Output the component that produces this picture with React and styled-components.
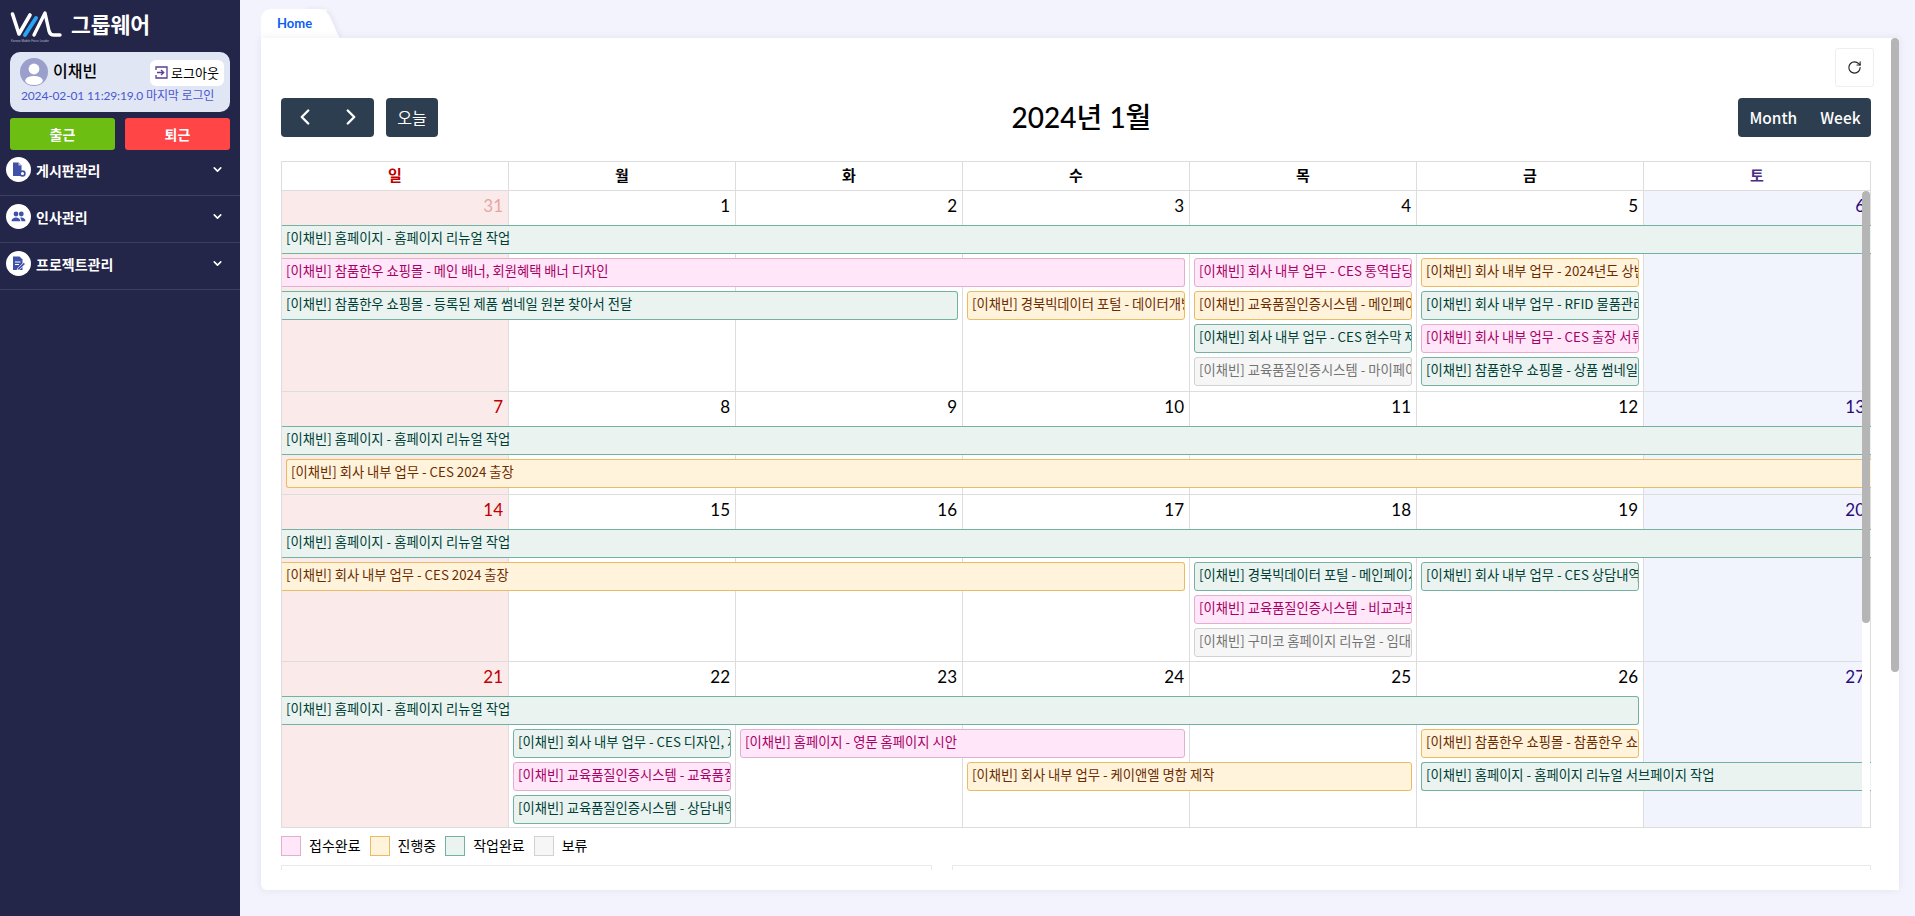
import React from "react";
import styled, { createGlobalStyle } from "styled-components";
import { ChevronDown, ChevronLeft, ChevronRight, RotateCw } from "lucide-react";

const KR = `"Noto Sans CJK KR", sans-serif`;
const LATO = `Lato, "Noto Sans CJK KR", sans-serif`;

const GlobalStyle = createGlobalStyle`
  html, body { margin: 0; padding: 0; height: 100%; overflow: hidden; }
  body { font-family: ${KR}; background: #f3f3fd; color: #000; }
  * { box-sizing: border-box; }
`;

const TONES = {
  pink: { bg: "#ffe6f9", line: "#e2aed2", text: "#a80066" },
  orange: { bg: "#fff3dc", line: "#ebbb62", text: "#6b2c00" },
  green: { bg: "#eaf3f0", line: "#75b1a3", text: "#003f36" },
  gray: { bg: "#f6f6f6", line: "#d2d2d2", text: "#747474" },
};

const Shell = styled.div`
  display: flex;
  width: 1915px;
  height: 916px;
`;

/* sidebar */
const Sidebar = styled.aside`
  width: 240px;
  flex: none;
  background: #232549;
`;

const Brand = styled.div`
  height: 52px;
  padding: 8px 0 0 10px;
  display: flex;
  align-items: flex-start;
  gap: 9px;
`;

const BrandName = styled.span`
  font-size: 21.5px;
  font-weight: 700;
  line-height: 31px;
  color: #fff;
`;

const Profile = styled.div`
  margin: 0 10px;
  height: 60px;
  padding: 6px 6px 0 10px;
  background: #e1e6f5;
  border-radius: 10px;
`;

const ProfileRow = styled.div`
  display: flex;
  align-items: center;
  gap: 5px;
`;

const Avatar = styled.div`
  width: 28px;
  height: 28px;
  border-radius: 50%;
  background: #9a9fcb;
  overflow: hidden;
  flex: none;
`;

const UserName = styled.span`
  font-size: 16px;
  font-weight: 500;
  margin-top: -4px;
`;

const Logout = styled.div`
  margin-left: auto;
  margin-top: 1px;
  width: 74px;
  height: 26px;
  background: #fff;
  border-radius: 6px;
  display: flex;
  align-items: center;
  justify-content: center;
  gap: 3px;
  font-size: 13px;
`;

const LastLogin = styled.div`
  margin: 1px 0 0 1px;
  font-family: ${LATO};
  font-size: 12px;
  line-height: 18px;
  color: #4a58d0;
  white-space: nowrap;
  letter-spacing: -0.15px;
`;

const Attendance = styled.div`
  display: grid;
  grid-template-columns: 105px 105px;
  gap: 10px;
  margin: 6px 10px 0;
`;

const AttendanceButton = styled.div`
  height: 32px;
  border-radius: 3px;
  background: ${(p) => p.$bg};
  color: #fff;
  font-size: 14px;
  font-weight: 700;
  display: flex;
  align-items: center;
  justify-content: center;
`;

const MenuItem = styled.div`
  height: 47px;
  padding: 0 16px 5px 6px;
  border-bottom: 1px solid #3b3d63;
  display: flex;
  align-items: center;
  color: #fff;
  &:first-of-type { height: 46px; padding-bottom: 6px; }
`;

const MenuBadge = styled.span`
  width: 25px;
  height: 25px;
  border-radius: 50%;
  background: #fff;
  flex: none;
  display: flex;
  align-items: center;
  justify-content: center;
`;

const MenuLabel = styled.span`
  margin-left: 5px;
  font-size: 14px;
  font-weight: 700;
  flex: 1;
`;

/* main */
const Main = styled.main`
  flex: 1;
  min-width: 0;
  padding: 9px 16px 26px 21px;
  display: flex;
  flex-direction: column;
`;

const Tab = styled.div`
  position: relative;
  z-index: 0;
  width: 66px;
  height: 29px;
  padding-left: 16px;
  background: #fff;
  border-radius: 10px 0 0 0;
  font-family: ${LATO};
  font-size: 13px;
  font-weight: 700;
  line-height: 29px;
  color: #0d5cf5;
  &::after {
    content: "";
    position: absolute;
    z-index: -1;
    top: 0;
    right: -6px;
    width: 24px;
    height: 29px;
    background: #fff;
    border-radius: 0 8px 0 0;
    transform: skewX(24deg);
    box-shadow: 3px -1px 4px rgba(40, 40, 90, 0.05);
  }
`;

const Card = styled.section`
  position: relative;
  flex: 1;
  min-height: 0;
  padding-bottom: 20px;
  background: #fff;
  border-radius: 0 0 6px 6px;
  box-shadow: 0 0 8px rgba(40, 40, 90, 0.08);
  display: flex;
`;

const CardScroll = styled.div`
  flex: 1;
  min-width: 0;
  overflow: hidden;
  padding: 10px 28px 0 20px;
`;

/* the page's scrollbars, drawn over the content */
const ScrollTrack = styled.div`
  position: absolute;
  z-index: 2;
  top: 0;
  bottom: 0;
  right: ${(p) => p.$right}px;
  width: 8px;
  background: #fff;
`;

const ScrollThumb = styled.div`
  height: ${(p) => p.$height}px;
  background: #b5b5b5;
  border-radius: 4px;
`;

const TopActions = styled.div`
  display: flex;
  justify-content: flex-end;
  margin-right: -3px;
`;

const RefreshButton = styled.div`
  width: 39px;
  height: 39px;
  border: 1px solid #eeeeee;
  border-radius: 3px;
  display: flex;
  align-items: center;
  justify-content: center;
`;

const Toolbar = styled.div`
  margin-top: 11px;
  height: 39px;
  display: flex;
  align-items: center;
  justify-content: space-between;
`;

const ToolGroup = styled.div`
  display: flex;
  gap: 12px;
  width: ${(p) => p.$width}px;
  justify-content: ${(p) => p.$justify || "flex-start"};
`;

const DarkButton = styled.div`
  height: 39px;
  padding-bottom: 2px;
  background: #2c3e50;
  border-radius: 4px;
  color: #fff;
  display: flex;
  align-items: center;
  justify-content: center;
  font-size: ${(p) => p.$size || 14}px;
  font-weight: ${(p) => p.$weight || 400};
  width: ${(p) => p.$width}px;
`;

const ArrowCell = styled.span`
  display: flex;
  justify-content: center;
  width: 46px;
`;

const ViewLabel = styled.span`
  display: block;
  padding: 0 11px 0 12px;
`;

const Title = styled.h2`
  margin: 0;
  font-family: ${LATO};
  font-size: 28px;
  font-weight: 500;
  line-height: 39px;
`;

const Calendar = styled.div`
  margin-top: 24px;
  width: 1590px;
  border-left: 1px solid #dddddd;
  border-top: 1px solid #dddddd;
  border-bottom: 1px solid #dddddd;
`;

const HeadRow = styled.div`
  display: grid;
  grid-template-columns: repeat(7, 227px);
  height: 29px;
  border-bottom: 1px solid #dddddd;
`;

const HeadCell = styled.div`
  border-right: 1px solid #dddddd;
  text-align: center;
  font-size: 15px;
  font-weight: 700;
  line-height: 25px;
  color: ${(p) => p.$color};
`;

const WeekScroll = styled.div`
  position: relative;
  width: 1589px;
  height: 636px;
  overflow: hidden;
`;

const Week = styled.div`
  display: grid;
  height: ${(p) => p.$height}px;
  grid-template-columns: repeat(7, 227px);
  grid-template-rows: 30px repeat(${(p) => p.$rows}, 29px) minmax(0, 1fr);
  row-gap: 4px;
  border-bottom: 1px solid #dddddd;
  overflow: hidden;
`;

const DayCell = styled.div`
  grid-row: 1 / -1;
  grid-column: ${(p) => p.$col};
  border-right: 1px solid #dddddd;
  background: ${(p) => (p.$col === 1 ? "#fbeaea" : p.$col === 7 ? "#f1f4fd" : "#fff")};
  padding: 3px 5px 0 0;
  text-align: right;
  font-family: ${LATO};
  font-size: 17px;
  line-height: 24px;
  color: ${(p) => (p.$col === 1 ? "#c00000" : p.$col === 7 ? "#2a0a7a" : "#000")};
`;

const DayNumber = styled.span`
  opacity: ${(p) => (p.$faded ? 0.3 : 1)};
`;

const Event = styled.div`
  grid-column: ${(p) => p.$from} / ${(p) => p.$to};
  grid-row: ${(p) => p.$row + 1};
  z-index: 1;
  min-width: 0;
  margin-left: ${(p) => (p.$openLeft ? 0 : 4)}px;
  margin-right: ${(p) => (p.$openRight ? 0 : 5)}px;
  padding-left: 4px;
  background: ${(p) => TONES[p.$tone].bg};
  color: ${(p) => TONES[p.$tone].text};
  border: 1px solid ${(p) => TONES[p.$tone].line};
  border-left-width: ${(p) => (p.$openLeft ? 0 : 1)}px;
  border-right-width: ${(p) => (p.$openRight ? 0 : 1)}px;
  border-radius: ${(p) => (p.$openLeft ? 0 : 3)}px ${(p) => (p.$openRight ? 0 : 3)}px
    ${(p) => (p.$openRight ? 0 : 3)}px ${(p) => (p.$openLeft ? 0 : 3)}px;
  font-size: 13.3px;
  font-weight: 400;
  line-height: 24px;
  white-space: nowrap;
  overflow: hidden;
`;

const Legend = styled.div`
  margin-top: 8px;
  height: 20px;
  display: flex;
  align-items: center;
`;

const Swatch = styled.span`
  width: 20px;
  height: 20px;
  flex: none;
  background: ${(p) => TONES[p.$tone].bg};
  border: 1px solid ${(p) => TONES[p.$tone].line};
`;

const LegendLabel = styled.span`
  margin: 0 9px 3px 8px;
  font-size: 14px;
  line-height: 18px;
`;

const Panels = styled.div`
  margin-top: 9px;
  display: grid;
  grid-template-columns: 651px 919px;
  gap: 20px;
`;

const Panel = styled.div`
  height: 227px;
  border: 1px solid #eaeaea;
`;

const LogoMark = () => (
  <svg width="52" height="34" viewBox="0 0 52 34" fill="none">
    <path d="M2.5 6 L9 26 L20 7" stroke="#fff" strokeWidth="3.6" strokeLinejoin="round" strokeLinecap="round" />
    <path d="M15 27 L26 10" stroke="#2aa4f4" strokeWidth="4" strokeLinecap="round" />
    <path d="M24 27 L35 5 L39 23 Q40 27 44 27 L50 27" stroke="#fff" strokeWidth="3.4" strokeLinejoin="round" strokeLinecap="round" />
    <text x="1" y="33.5" fontSize="3" fill="#b9bccf" fontFamily="Liberation Sans, sans-serif">Korean Mobile Force Leader</text>
  </svg>
);

const AvatarFigure = () => (
  <svg width="28" height="28" viewBox="0 0 28 28">
    <circle cx="14" cy="11" r="5.4" fill="#fff" />
    <ellipse cx="14" cy="22.5" rx="8.8" ry="4.6" fill="#fff" />
  </svg>
);

const LogoutIcon = () => (
  <svg width="13" height="13" viewBox="0 0 13 13" fill="none">
    <path d="M1 4 V1 H12 V12 H1 V9" stroke="#5a3d8f" strokeWidth="1.3" />
    <path d="M2 6.5 H8.5 M6 4 L8.7 6.5 L6 9" stroke="#5a3d8f" strokeWidth="1.3" />
  </svg>
);

const BoardIcon = () => (
  <svg width="15" height="15" viewBox="0 0 15 15">
    <path d="M2 0.5 H7.5 L10.5 3.5 V14 H2 Z" fill="#3f51a8" />
    <path d="M7.5 0.5 V3.5 H10.5 Z" fill="#c4cbe8" />
    <circle cx="11.5" cy="11.5" r="2.4" fill="#fff" stroke="#3f51a8" strokeWidth="1.6" />
  </svg>
);

const PeopleIcon = () => (
  <svg width="15" height="15" viewBox="0 0 15 15" fill="#3f51a8">
    <circle cx="5" cy="5" r="2.4" />
    <circle cx="10.3" cy="5" r="2.4" />
    <path d="M0.5 12.2 C0.5 9.6 2.8 8.4 5 8.4 C7.2 8.4 9.4 9.6 9.4 12.2 Z" />
    <path d="M10.4 12.2 C10.4 10.6 10 9.5 9 8.7 C11.6 8 14.5 9.4 14.5 12.2 Z" />
  </svg>
);

const ProjectIcon = () => (
  <svg width="15" height="15" viewBox="0 0 15 15">
    <path d="M2 0.5 H8.5 L11.5 3.5 V14 H2 Z" fill="#3f51a8" />
    <path d="M4 6 H9.5 M4 8.5 H8" stroke="#fff" strokeWidth="1" />
    <path d="M6.5 12.5 L12.8 6.5 L14.4 8 L8.2 13.8 L6.3 14 Z" fill="#3f51a8" stroke="#fff" strokeWidth="0.7" />
  </svg>
);

const MENU = [
  { label: "게시판관리", Icon: BoardIcon },
  { label: "인사관리", Icon: PeopleIcon },
  { label: "프로젝트관리", Icon: ProjectIcon },
];

const HEADS = [
  { label: "일", color: "#c00000" },
  { label: "월", color: "#000" },
  { label: "화", color: "#000" },
  { label: "수", color: "#000" },
  { label: "목", color: "#000" },
  { label: "금", color: "#000" },
  { label: "토", color: "#4b2e83" },
];

const ev = (row, from, to, tone, text, open = "") => ({
  row, from, to, tone, text: `[이채빈] ${text}`,
  openLeft: open.includes("L"),
  openRight: open.includes("R"),
});

const RENEWAL = "홈페이지 - 홈페이지 리뉴얼 작업";

const WEEKS = [
  {
    rows: 5,
    height: 201,
    days: [31, 1, 2, 3, 4, 5, 6],
    faded: [0],
    events: [
      ev(1, 1, 8, "green", RENEWAL, "LR"),
      ev(2, 1, 5, "pink", "참품한우 쇼핑몰 - 메인 배너, 회원혜택 배너 디자인", "L"),
      ev(2, 5, 6, "pink", "회사 내부 업무 - CES 통역담당자 섭외"),
      ev(2, 6, 7, "orange", "회사 내부 업무 - 2024년도 상반기 계획"),
      ev(3, 1, 4, "green", "참품한우 쇼핑몰 - 등록된 제품 썸네일 원본 찾아서 전달", "L"),
      ev(3, 4, 5, "orange", "경북빅데이터 포털 - 데이터개방 페이지 수정"),
      ev(3, 5, 6, "orange", "교육품질인증시스템 - 메인페이지 수정"),
      ev(3, 6, 7, "green", "회사 내부 업무 - RFID 물품관리 시스템"),
      ev(4, 5, 6, "green", "회사 내부 업무 - CES 현수막 제작"),
      ev(4, 6, 7, "pink", "회사 내부 업무 - CES 출장 서류 작성"),
      ev(5, 5, 6, "gray", "교육품질인증시스템 - 마이페이지 수정"),
      ev(5, 6, 7, "green", "참품한우 쇼핑몰 - 상품 썸네일 작업"),
    ],
  },
  {
    rows: 2,
    height: 103,
    days: [7, 8, 9, 10, 11, 12, 13],
    events: [
      ev(1, 1, 8, "green", RENEWAL, "LR"),
      ev(2, 1, 8, "orange", "회사 내부 업무 - CES 2024 출장", "R"),
    ],
  },
  {
    rows: 4,
    height: 167,
    days: [14, 15, 16, 17, 18, 19, 20],
    events: [
      ev(1, 1, 8, "green", RENEWAL, "LR"),
      ev(2, 1, 5, "orange", "회사 내부 업무 - CES 2024 출장", "L"),
      ev(2, 5, 6, "green", "경북빅데이터 포털 - 메인페이지 수정"),
      ev(2, 6, 7, "green", "회사 내부 업무 - CES 상담내역 정리"),
      ev(3, 5, 6, "pink", "교육품질인증시스템 - 비교과프로그램"),
      ev(4, 5, 6, "gray", "구미코 홈페이지 리뉴얼 - 임대 안내"),
    ],
  },
  {
    rows: 4,
    height: 168,
    days: [21, 22, 23, 24, 25, 26, 27],
    events: [
      ev(1, 1, 7, "green", RENEWAL, "L"),
      ev(2, 2, 3, "green", "회사 내부 업무 - CES 디자인, 제작"),
      ev(2, 3, 5, "pink", "홈페이지 - 영문 홈페이지 시안"),
      ev(2, 6, 7, "orange", "참품한우 쇼핑몰 - 참품한우 쇼핑몰 수정"),
      ev(3, 2, 3, "pink", "교육품질인증시스템 - 교육품질 인증"),
      ev(3, 4, 6, "orange", "회사 내부 업무 - 케이앤엘 명함 제작"),
      ev(3, 6, 8, "green", "홈페이지 - 홈페이지 리뉴얼 서브페이지 작업", "R"),
      ev(4, 2, 3, "green", "교육품질인증시스템 - 상담내역 수정"),
    ],
  },
];

const LEGEND = [
  { tone: "pink", label: "접수완료" },
  { tone: "orange", label: "진행중" },
  { tone: "green", label: "작업완료" },
  { tone: "gray", label: "보류" },
];

export default function App() {
  return (
    <Shell>
      <GlobalStyle />
      <Sidebar>
        <Brand>
          <LogoMark />
          <BrandName>그룹웨어</BrandName>
        </Brand>
        <Profile>
          <ProfileRow>
            <Avatar><AvatarFigure /></Avatar>
            <UserName>이채빈</UserName>
            <Logout><LogoutIcon />로그아웃</Logout>
          </ProfileRow>
          <LastLogin>2024-02-01 11:29:19.0 마지막 로그인</LastLogin>
        </Profile>
        <Attendance>
          <AttendanceButton $bg="#6cbe12">출근</AttendanceButton>
          <AttendanceButton $bg="#ff4545">퇴근</AttendanceButton>
        </Attendance>
        <nav>
          {MENU.map(({ label, Icon }) => (
            <MenuItem key={label}>
              <MenuBadge><Icon /></MenuBadge>
              <MenuLabel>{label}</MenuLabel>
              <ChevronDown size={13} strokeWidth={3} color="#fff" />
            </MenuItem>
          ))}
        </nav>
      </Sidebar>
      <Main>
        <Tab>Home</Tab>
        <Card>
          <CardScroll>
            <TopActions>
              <RefreshButton><RotateCw size={15} color="#222" strokeWidth={1.8} /></RefreshButton>
            </TopActions>
            <Toolbar>
              <ToolGroup $width={157}>
                <DarkButton $width={93}>
                  <ArrowCell><ChevronLeft size={26} color="#fff" strokeWidth={2.2} /></ArrowCell>
                  <ArrowCell><ChevronRight size={26} color="#fff" strokeWidth={2.2} /></ArrowCell>
                </DarkButton>
                <DarkButton $width={52} $size={16}>오늘</DarkButton>
              </ToolGroup>
              <Title>2024년 1월</Title>
              <ToolGroup $width={146} $justify="flex-end">
                <DarkButton $width={133} $size={15.5} $weight={500}>
                  <ViewLabel>Month</ViewLabel>
                  <ViewLabel>Week</ViewLabel>
                </DarkButton>
              </ToolGroup>
            </Toolbar>
            <Calendar>
              <HeadRow>
                {HEADS.map((h) => (
                  <HeadCell key={h.label} $color={h.color}>{h.label}</HeadCell>
                ))}
              </HeadRow>
              <WeekScroll>
                {WEEKS.map((week) => (
                  <Week key={week.days[0]} $rows={week.rows} $height={week.height}>
                    {week.days.map((day, i) => (
                      <DayCell key={i} $col={i + 1}>
                        <DayNumber $faded={week.faded?.includes(i)}>{day}</DayNumber>
                      </DayCell>
                    ))}
                    {week.events.map((e, i) => (
                      <Event
                        key={i}
                        $row={e.row}
                        $from={e.from}
                        $to={e.to}
                        $tone={e.tone}
                        $openLeft={e.openLeft}
                        $openRight={e.openRight}
                      >
                        {e.text}
                      </Event>
                    ))}
                  </Week>
                ))}
                <ScrollTrack $right={1}>
                  <ScrollThumb $height={432} />
                </ScrollTrack>
              </WeekScroll>
            </Calendar>
            <Legend>
              {LEGEND.map((item) => (
                <React.Fragment key={item.tone}>
                  <Swatch $tone={item.tone} />
                  <LegendLabel>{item.label}</LegendLabel>
                </React.Fragment>
              ))}
            </Legend>
            <Panels>
              <Panel />
              <Panel />
            </Panels>
          </CardScroll>
          <ScrollTrack $right={0}>
            <ScrollThumb $height={634} />
          </ScrollTrack>
        </Card>
      </Main>
    </Shell>
  );
}
